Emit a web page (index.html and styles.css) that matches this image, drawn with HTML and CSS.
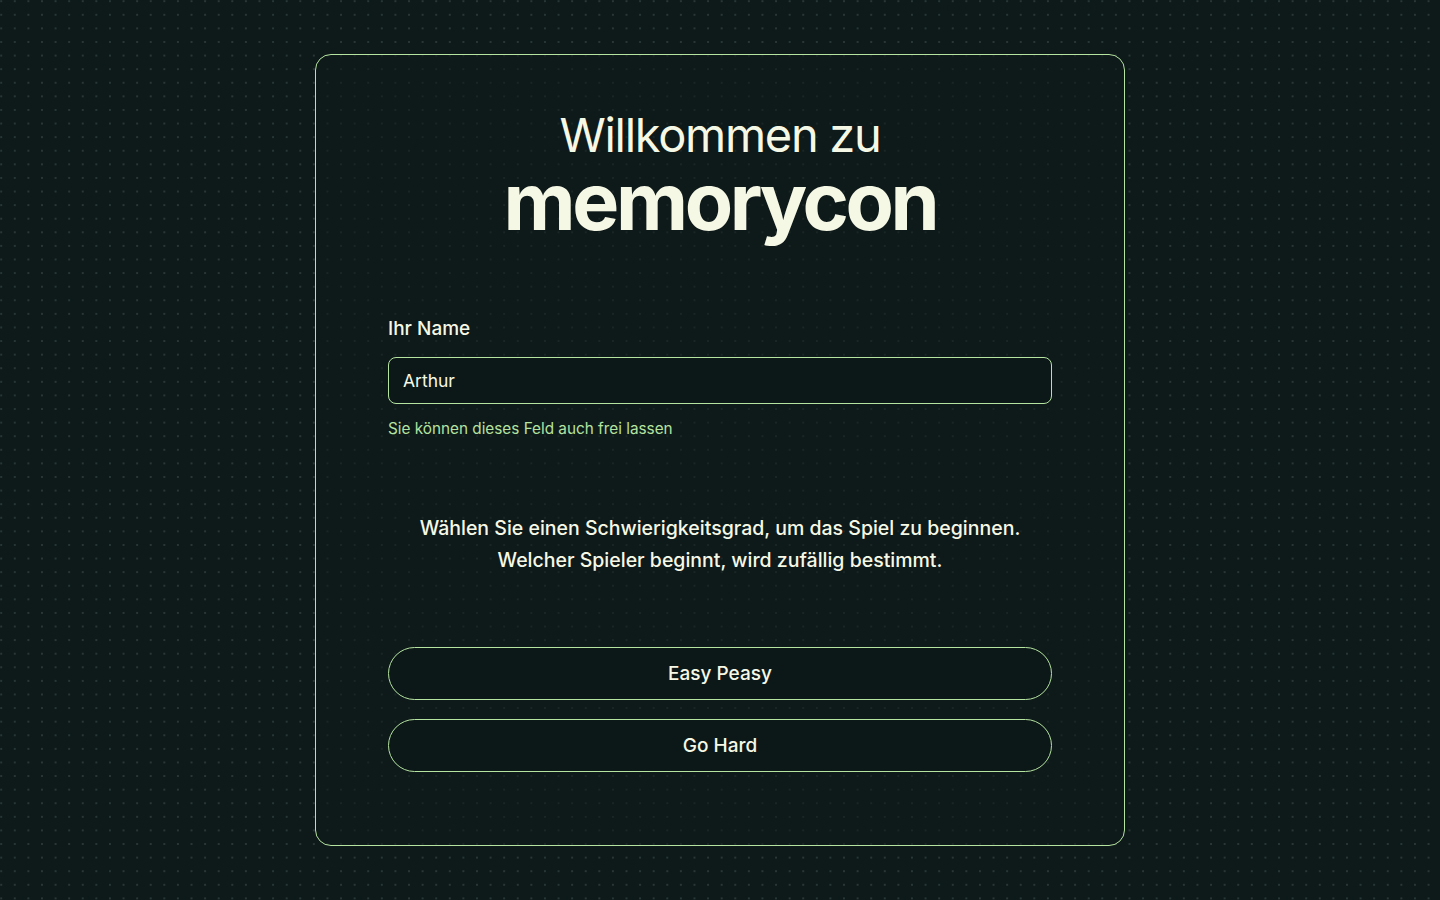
FILE: index.html
```html
<!DOCTYPE html>
<html lang="de">
<head>
<meta charset="utf-8">
<title>memorycon</title>
<link rel="stylesheet" href="styles.css">
</head>
<body>
<main class="page">
  <section class="card">
    <h1 class="title">
      <span class="title-small">Willkommen zu</span>
      <span class="title-big">memorycon</span>
    </h1>
    <div class="field">
      <label class="label" for="name">Ihr Name</label>
      <input class="input" id="name" type="text" value="Arthur">
      <p class="hint">Sie können dieses Feld auch frei lassen</p>
    </div>
    <p class="intro">Wählen Sie einen Schwierigkeitsgrad, um das Spiel zu beginnen.<br>Welcher Spieler beginnt, wird zufällig bestimmt.</p>
    <div class="actions">
      <button class="btn" type="button">Easy Peasy</button>
      <button class="btn" type="button">Go Hard</button>
    </div>
  </section>
</main>
</body>
</html>
```
FILE: styles.css
```css
* { box-sizing: border-box; }
html, body { margin: 0; padding: 0; }
body {
  background-color: #0e1a1a;
  background-image: radial-gradient(circle, #283735 0.9px, transparent 1.3px);
  background-size: 13.6px 13.6px;
  background-position: 8px 8px;
  color: #f6f8e6;
  font-family: Inter, "Noto Sans", "Liberation Sans", sans-serif;
  min-height: 900px;
}
.page {
  display: flex;
  justify-content: center;
  padding-top: 54px;
}
.card {
  width: 810px;
  height: 792px;
  border: 1.5px solid #b5e3a0;
  border-radius: 16px;
  background: rgba(14, 26, 26, 0.55);
  padding: 0 72px;
  display: flex;
  flex-direction: column;
}
.title {
  margin: 52px 0 0;
  display: flex;
  flex-direction: column;
  align-items: center;
  font-weight: 400;
}
.title-small {
  font-size: 47px;
  line-height: 56px;
  font-weight: 400;
  letter-spacing: -1.3px;
}
.title-big {
  font-size: 79px;
  line-height: 76px;
  font-weight: 700;
  letter-spacing: -3.4px;
}
.field {
  margin-top: 78px;
  display: flex;
  flex-direction: column;
}
.label {
  font-size: 19px;
  line-height: 24px;
  font-weight: 500;
}
.input {
  margin-top: 16px;
  height: 47px;
  border: 1.5px solid #b5e3a0;
  border-radius: 8px;
  background: #0c1818;
  color: #f6f8e6;
  font-family: inherit;
  font-size: 17.5px;
  padding: 0 14px;
  outline: none;
}
.hint {
  margin: 15px 0 0;
  color: #b5e3a0;
  font-size: 15.3px;
  line-height: 20px;
}
.intro {
  margin: 73px 0 0;
  text-align: center;
  font-size: 19.5px;
  line-height: 32px;
  font-weight: 500;
}
.actions {
  margin-top: 71px;
  display: flex;
  flex-direction: column;
  gap: 19px;
}
.btn {
  height: 53px;
  border: 1.5px solid #b5e3a0;
  border-radius: 27px;
  background: #0c1818;
  color: #f6f8e6;
  font-family: inherit;
  font-size: 19px;
  font-weight: 500;
  cursor: pointer;
}
```
